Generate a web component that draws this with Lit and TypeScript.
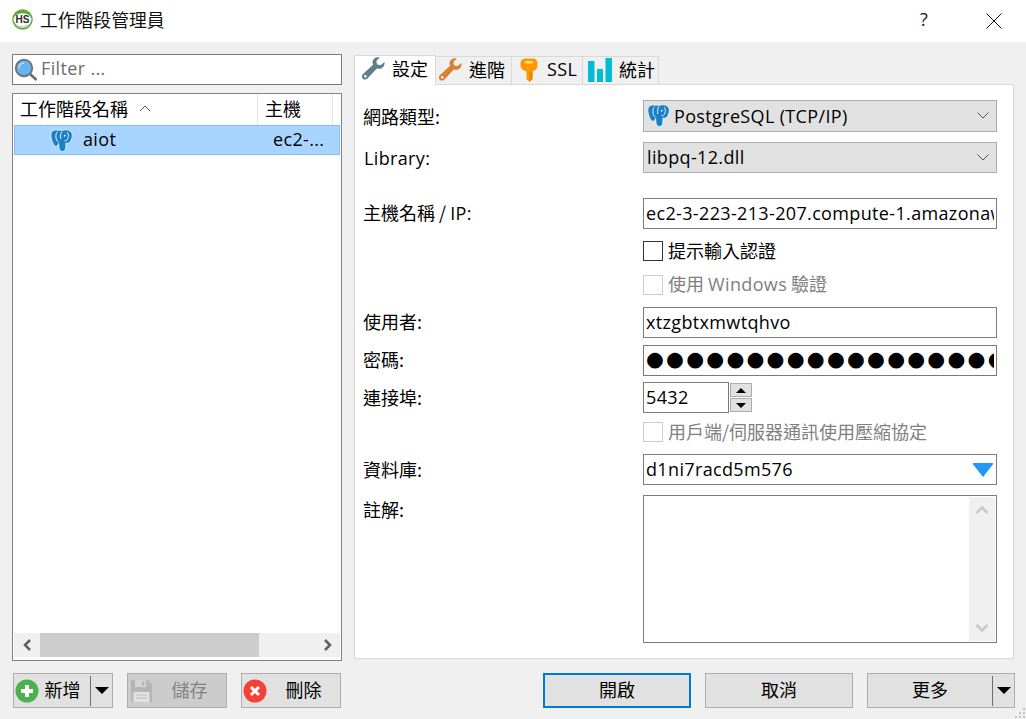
import { LitElement, html, css, svg } from "lit";
import { customElement } from "lit/decorators.js";

const elephant = (s: number) => html`<svg class="ico" width=${s} height=${s} viewBox="0 0 24 24">
  <path d="M7 1C2.500.5.300 4 1 8c.6 4 2.800 10 5 10 1.500 0 2.500-1.500 3-3l.3 4c.2 3.300 1.700 4.500 3.700 4.500 2.700 0 3.300-2.200 3.500-5.300l.2-3.700c1 .8 2.800.8 4.300-1.300 2.500-3.300 3.200-8.500.5-10.700-2.500-2-6.300-2-8.500-1-2-.5-3.500-.5-5.500 0z" fill="#1a7fc6" stroke="#e8f3fb" stroke-width=".9"/>
  <path d="M7.500 3C5.800 5 5.800 9 6.800 11.500c.5 1.200 1.300 1.800 2.200 2.200M12.300 2.500C11 4.500 10.700 7.500 11.300 10.500M18.200 3.500c1.500 2.500 1.200 6-.5 8-.8.8-1.800 1-2.700.7" fill="none" stroke="#fff" stroke-width=".9"/>
  <circle cx="15.300" cy="7" r=".9" fill="#fff"/>
</svg>`;

const wrench = (c: string) => html`<svg class="ico" width="24" height="24" viewBox="0 0 24 24">
  <path d="M23.500 5c.5 3.500-2 6.800-5.500 6.800-.8 0-1.500-.1-2.200-.4L6.500 21.500c-1.300 1.400-3.400 1.500-4.700.2C.5 20.400.6 18.300 2 17l10.100-9.300c-.4-.8-.5-1.500-.5-2.300C11.600 2 15 -.4 18.800.6l-3.500 3.400.8 3.400 3.400.8z" fill=${c}/>
  <circle cx="4.300" cy="19.200" r="1.300" fill="#fff"/>
</svg>`;

const chevL = svg`<path d="M8 1 3 6l5 5" fill="none" stroke-width="2.500"/>`;

@customElement("app-root")
export class AppRoot extends LitElement {
  static styles = css`
    :host {
      display: block;
      width: 1026px;
      height: 719px;
      position: relative;
      overflow: hidden;
      background: #f0f0f0;
      color: #000;
      font: 18px/24px "Noto Sans CJK TC", "Noto Sans", sans-serif;
    }
    .lat { font-family: "Open Sans", "Noto Sans", sans-serif; font-size: 18px; letter-spacing: 0.350px; }
    .ico { display: block; flex: none; }
    .title {
      height: 42px;
      box-sizing: border-box;
      background: #fff;
      display: flex;
      align-items: center;
      padding: 0 0 4px 12px;
      gap: 7px;
    }
    .title .name { flex: 1; font-size: 17.800px; color: #111; padding-bottom: 1px; }
    .help { width: 14px; color: #222; font-family: "Open Sans", sans-serif; font-size: 18px; margin-right: 45px; }
    .close { margin-right: 24px; margin-top: 3px; }
    .main {
      display: grid;
      grid-template-columns: 330px 660px;
      gap: 12px;
      padding: 12px 12px 0;
      height: 619px;
      box-sizing: border-box;
    }
    .left { display: flex; flex-direction: column; gap: 8px; }
    .filter {
      height: 31px;
      box-sizing: border-box;
      background: #fff;
      border: 1px solid #7a7a7a;
      display: flex;
      align-items: center;
      padding: 0 0 0 1px;
      gap: 3px;
      color: #6d6d6d;
    }
    .filter .lat { padding-bottom: 3px; }
    .list {
      height: 568px;
      box-sizing: border-box;
      background: #fff;
      border: 1px solid #828282;
      display: flex;
      flex-direction: column;
      padding: 0 1px 1px;
    }
    .lhead { display: flex; height: 31px; align-items: center; }
    .lhead > div { box-sizing: border-box; height: 31px; display: flex; align-items: center; padding-bottom: 3px; border-right: 1px solid #e5e5e5; }
    .c1 { width: 244px; padding-left: 6px; gap: 11px; }
    .c2 { width: 75px; padding-left: 7px; }
    .lrow {
      height: 30px;
      box-sizing: border-box;
      background: #a8d5ff;
      border: 1px solid #7fc0fa;
      display: flex;
      align-items: center;
      padding-left: 35px;
    }
    .lrow .lat { padding-bottom: 2px; }
    .lrow .nm { margin-left: 10px; width: 190px; }
    .lfill { flex: 1; }
    .hscroll {
      height: 24px;
      background: #f0f0f0;
      display: flex;
      align-items: stretch;
      margin-bottom: 2px;
    }
    .hscroll .arrow { width: 26px; display: flex; align-items: center; justify-content: center; stroke: #606060; }
    .hscroll .thumb { width: 219px; background: #cdcdcd; }
    .hscroll .rest { flex: 1; }
    .right { display: flex; flex-direction: column; }
    .tabs { display: flex; align-items: flex-end; height: 30px; }
    .tab {
      height: 28px;
      box-sizing: border-box;
      border: 1px solid #d9d9d9;
      border-bottom: none;
      border-left: none;
      background: #f0f0f0;
      display: flex;
      align-items: center;
      gap: 6px;
      padding: 0 0 2px 2px;
    }
    .tab span { padding-bottom: 2px; }
    .tab.on {
      height: 30px;
      width: 82px;
      background: #fff;
      border-left: 1px solid #d9d9d9;
      position: relative;
      top: 1px;
      z-index: 1;
      padding: 0 0 4px 6px;
      gap: 7px;
    }
    .t2 { width: 76px; gap: 7px; }
    .t3 { width: 71px; padding-left: 8px; gap: 9px; }
    .t4 { width: 76px; padding-left: 5px; gap: 7px; }
    .panel {
      height: 575px;
      box-sizing: border-box;
      background: #fff;
      border: 1px solid #d9d9d9;
      padding: 15px 16px 0 8px;
      display: grid;
      grid-template-columns: 280px 354px;
      align-content: start;
    }
    .label { line-height: 24px; padding-top: 3px; }
    .first { padding-top: 4px; }
    .up1 { padding-top: 2px; }
    .lib { padding: 4px 0 0 1px; }
    .field { box-sizing: border-box; height: 31px; display: flex; align-items: center; white-space: nowrap; overflow: hidden; padding: 0 2px 2px; }
    .clip { flex: 1; min-width: 0; overflow: hidden; }
    .combo { background: #e1e1e1; border: 1px solid #adadad; padding: 0 7px 1px 3px; justify-content: space-between; }
    .tall { height: 32px; }
    .combo .v { display: flex; align-items: center; gap: 4px; }
    .input { background: #fff; border: 1px solid #7a7a7a; }
    .mt10 { margin-top: 10px; }
    .mt25 { margin-top: 25px; }
    .mt12 { margin-top: 12px; }
    .mt14 { margin-top: 14px; }
    .mt7 { margin-top: 7px; }
    .mt6 { margin-top: 6px; }
    .mt9 { margin-top: 9px; }
    .span2 { grid-column: 2; }
    .check { height: 20px; display: flex; align-items: center; gap: 5px; font-size: 18px; white-space: nowrap; }
    .check .txt { padding-bottom: 3px; }
    .box { width: 20px; height: 20px; box-sizing: border-box; border: 1px solid #333; background: #fff; }
    .check.off { color: #808080; }
    .check.off .box { border-color: #ccc; }
    .dots {
      font-family: "DejaVu Sans", sans-serif;
      font-size: 20.500px;
      letter-spacing: 2.210px;
      padding: 0 2px 3px;
    }
    .spin { display: flex; gap: 1px; align-items: stretch; height: 31px; }
    .spin .input { width: 86px; }
    .sbtns { width: 22px; display: flex; flex-direction: column; gap: 1px; padding: 1px 0 1px; box-sizing: border-box; }
    .sbtn { flex: 1; background: #e1e1e1; border: 1px solid #adadad; display: flex; align-items: center; justify-content: center; }
    .tri { width: 0; height: 0; border-left: 5px solid transparent; border-right: 5px solid transparent; }
    .tri.up { border-bottom: 5px solid #000; }
    .tri.dn { border-top: 5px solid #000; }
    .db { justify-content: space-between; padding-right: 2px; }
    .dbarrow { width: 0; height: 0; border-left: 11px solid transparent; border-right: 11px solid transparent; border-top: 14px solid #2196f3; border-radius: 2px; margin-top: 2px; }
    .comment { height: 148px; box-sizing: border-box; background: #fff; border: 1px solid #7a7a7a; display: flex; justify-content: flex-end; padding: 1px; }
    .vscroll { width: 26px; background: #f0f0f0; display: flex; flex-direction: column; justify-content: space-between; align-items: center; padding: 8px 0; stroke: #c8c8c8; }
    .footer {
      height: 58px;
      box-sizing: border-box;
      padding: 12px 11px 0 13px;
      display: flex;
      align-items: flex-start;
    }
    .btn {
      height: 35px;
      box-sizing: border-box;
      background: #e1e1e1;
      border: 1px solid #adadad;
      display: flex;
      align-items: center;
      justify-content: center;
      flex: none;
      padding-bottom: 3px;
    }
    .btn .ico, .splitbar, .splitarrow { position: relative; top: 1.500px; }
    .b100 { width: 100px; justify-content: flex-start; padding-left: 1px; }
    .b148 { width: 148px; }
    .ml14 { margin-left: 14px; }
    .push { margin-left: auto; }
    .primary { border: 2px solid #0078d7; }
    .disabled { background: #ccc; color: #838383; }
    .lab { flex: 1; text-align: center; }
    .lab.new { padding-right: 4px; }
    .splitbar { width: 1px; height: 30px; background: #6e6e6e; }
    .splitarrow { width: 21px; display: flex; justify-content: center; }
    .splitarrow i { width: 0; height: 0; border-left: 7px solid transparent; border-right: 7px solid transparent; border-top: 7px solid #000; }
    .grip { position: absolute; right: 0; bottom: 0; }
  `;

  render() {
    return html`
      <div class="title">
        <svg class="ico" width="21" height="21" viewBox="0 0 21 21">
          <circle cx="10.500" cy="10.500" r="10.200" fill="#5fa83a"/>
          <path d="M2.500 14a9 9 0 0 0 16 0z" fill="#d9d9d9"/>
          <ellipse cx="10.500" cy="10.500" rx="9" ry="6.200" fill="#fff"/>
          <text x="10.500" y="14" text-anchor="middle" font-family="Liberation Sans" font-size="10" font-weight="700" fill="#2b2b2b">HS</text>
        </svg>
        <div class="name">工作階段管理員</div>
        <div class="help">?</div>
        <svg class="ico close" width="16" height="16" viewBox="0 0 16 16"><path d="M.5.500l15 15M15.500.500l-15 15" stroke="#111" fill="none"/></svg>
      </div>
      <div class="main">
        <div class="left">
          <div class="filter">
            <svg class="ico" width="24" height="24" viewBox="0 0 24 24">
              <path d="M15.500 15.500l7 6.500" stroke="#6b6b6b" stroke-width="2.500"/>
              <circle cx="10" cy="10" r="8.200" fill="#64b5f6" stroke="#757575" stroke-width="2"/>
              <path d="M5 10a5 5 0 0 1 5-5" stroke="#b9defb" stroke-width="1.500" fill="none"/>
            </svg>
            <span class="lat">Filter ...</span>
          </div>
          <div class="list">
            <div class="lhead">
              <div class="c1"><span>工作階段名稱</span>
                <svg width="12" height="7" viewBox="0 0 12 7"><path d="M1 6l5-5 5 5" fill="none" stroke="#555"/></svg>
              </div>
              <div class="c2">主機</div>
            </div>
            <div class="lrow">${elephant(23)}<span class="nm lat">aiot</span><span class="lat">ec2-...</span></div>
            <div class="lfill"></div>
            <div class="hscroll">
              <div class="arrow"><svg width="11" height="12" viewBox="0 0 11 12">${chevL}</svg></div>
              <div class="thumb"></div>
              <div class="rest"></div>
              <div class="arrow"><svg width="11" height="12" viewBox="0 0 11 12"><path d="M3 1l5 5-5 5" fill="none" stroke-width="2.500"/></svg></div>
            </div>
          </div>
        </div>
        <div class="right">
          <div class="tabs">
            <div class="tab on">${wrench("#607d8b")}<span>設定</span></div>
            <div class="tab t2">${wrench("#d9812a")}<span>進階</span></div>
            <div class="tab t3">
              <svg class="ico" width="18" height="24" viewBox="0 0 18 24">
                <path d="M5 .5h8a4.500 4.500 0 0 1 4.500 4.500v3c0 2.500-2 4.500-5 5.500V21l-3 2.800L6.500 21.500V13.500C3 12.500.5 10.500.5 8V5A4.500 4.500 0 0 1 5 .5z" fill="#ff9800"/>
                <path d="M9 13.500h3.500V21L9.500 23.800z" fill="#e68900"/>
                <rect x="5" y="3" width="8" height="2.500" rx="1.200" fill="#ffe082"/>
              </svg>
              <span class="lat">SSL</span>
            </div>
            <div class="tab t4">
              <svg class="ico" width="24" height="24" viewBox="0 0 24 24">
                <path d="M0 3h6.500v21H0zM9 11h6v13H9zM17.500 0H24v24h-6.500z" fill="#00bcd4"/>
              </svg>
              <span>統計</span>
            </div>
          </div>
          <div class="panel">
            <div class="label first">網路類型:</div>
            <div class="field combo tall"><span class="v">${elephant(23)}<span class="lat">PostgreSQL (TCP/IP)</span></span>${this.cv()}</div>
            <div class="label mt10 lat lib">Library:</div>
            <div class="field combo mt10"><span class="lat">libpq-12.dll</span>${this.cv()}</div>
            <div class="label up1 mt25">主機名稱 / <span class="lat">IP:</span></div>
            <div class="field input mt25"><span class="lat clip">ec2-3-223-213-207.compute-1.amazonaws.com</span></div>
            <div class="span2 check mt12"><div class="box"></div><span class="txt">提示輸入認證</span></div>
            <div class="span2 check off mt14"><div class="box"></div><span class="txt">使用 <span class="lat">Windows</span> 驗證</span></div>
            <div class="label up1 mt12">使用者:</div>
            <div class="field input mt12"><span class="lat">xtzgbtxmwtqhvo</span></div>
            <div class="label up1 mt7">密碼:</div>
            <div class="field input mt7 dots"><span class="clip">●●●●●●●●●●●●●●●●●●●●●●</span></div>
            <div class="label mt6">連接埠:</div>
            <div class="spin mt6">
              <div class="field input"><span class="lat">5432</span></div>
              <div class="sbtns">
                <div class="sbtn"><i class="tri up"></i></div>
                <div class="sbtn"><i class="tri dn"></i></div>
              </div>
            </div>
            <div class="span2 check off mt9"><div class="box"></div><span class="txt">用戶端/伺服器通訊使用壓縮協定</span></div>
            <div class="label mt12">資料庫:</div>
            <div class="field input db mt12"><span class="lat">d1ni7racd5m576</span><i class="dbarrow"></i></div>
            <div class="label up1 mt10">註解:</div>
            <div class="comment mt10">
              <div class="vscroll">
                <svg width="14" height="10" viewBox="0 0 14 10"><path d="M1.500 8 7 2.500 12.500 8" fill="none" stroke-width="2.500"/></svg>
                <svg width="14" height="10" viewBox="0 0 14 10"><path d="M1.500 2 7 7.500 12.500 2" fill="none" stroke-width="2.500"/></svg>
              </div>
            </div>
          </div>
        </div>
      </div>
      <div class="footer">
        <div class="btn b100">
          <svg class="ico" width="24" height="24" viewBox="0 0 24 24"><circle cx="12" cy="12" r="11.500" fill="#4caf50"/><path d="M12 6v12M6 12h12" stroke="#fff" stroke-width="4"/></svg>
          <span class="lab new">新增</span><div class="splitbar"></div><div class="splitarrow"><i></i></div>
        </div>
        <div class="btn b100 disabled ml14">
          <svg class="ico" width="24" height="24" viewBox="0 0 24 24"><path d="M2 1h17l4 4v18H2z" fill="#b5b5b5"/><rect x="6" y="1" width="11" height="7" fill="#d5d5d5"/><rect x="13" y="2.500" width="2.500" height="4" fill="#b5b5b5"/><rect x="4.500" y="13" width="16" height="10" fill="#e2e2e2"/><path d="M7 16h11M7 19h11" stroke="#bbb"/></svg>
          <span class="lab">儲存</span>
        </div>
        <div class="btn b100 ml14">
          <svg class="ico" width="24" height="24" viewBox="0 0 24 24"><circle cx="12" cy="12" r="11.500" fill="#f44336"/><path d="M8 8l8 8M16 8l-8 8" stroke="#fff" stroke-width="3"/></svg>
          <span class="lab">刪除</span>
        </div>
        <div class="btn b148 primary push">開啟</div>
        <div class="btn b148 ml14">取消</div>
        <div class="btn b148 ml14"><span class="lab">更多</span><div class="splitbar"></div><div class="splitarrow"><i></i></div></div>
      </div>
      <svg class="grip" width="12" height="12" viewBox="0 0 12 12"><path d="M9 1h2v2H9zM5 5h2v2H5zM9 5h2v2H9zM1 9h2v2H1zM5 9h2v2H5zM9 9h2v2H9z" fill="#c4c4c4"/></svg>
    `;
  }

  cv() {
    return html`<svg width="12" height="7" viewBox="0 0 12 7"><path d="M.5.500 6 6l5.500-5.500" fill="none" stroke="#555"/></svg>`;
  }
}
